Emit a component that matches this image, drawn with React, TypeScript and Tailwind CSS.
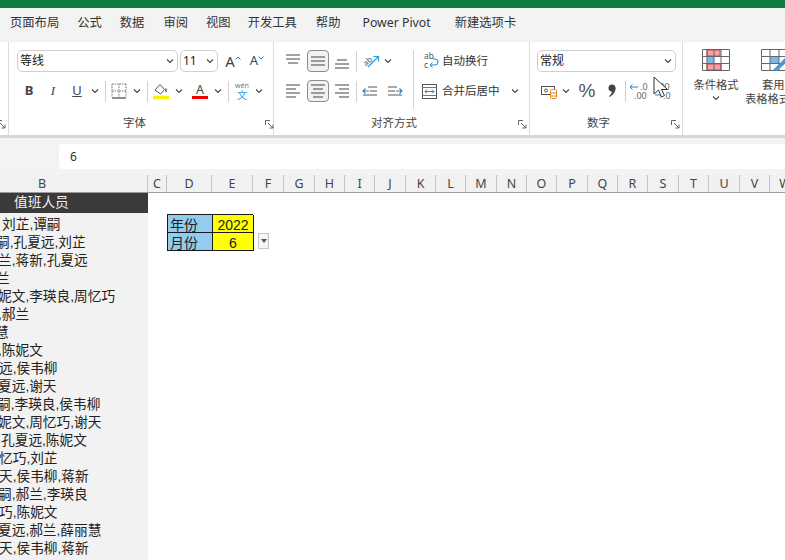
import type { ReactNode } from 'react'

const tabs = [
  { label: '页面布局', cls: 'ml-[10px]' },
  { label: '公式', cls: 'ml-[18px]' },
  { label: '数据', cls: 'ml-[18px]' },
  { label: '审阅', cls: 'ml-[19px]' },
  { label: '视图', cls: 'ml-[18px]' },
  { label: '开发工具', cls: 'ml-[17px]' },
  { label: '帮助', cls: 'ml-[19px]' },
  { label: 'Power Pivot', cls: 'ml-[22px]' },
  { label: '新建选项卡', cls: 'ml-[24px]' },
]

const columns = [
  { label: 'C', cls: 'w-[19px]' },
  { label: 'D', cls: 'w-[45px]' },
  { label: 'E', cls: 'w-[41px]' },
  { label: 'F', cls: 'w-[31px]' },
  { label: 'G', cls: 'w-[31px]' },
  { label: 'H', cls: 'w-[30px]' },
  { label: 'I', cls: 'w-[30px]' },
  { label: 'J', cls: 'w-[31px]' },
  { label: 'K', cls: 'w-[30px]' },
  { label: 'L', cls: 'w-[30px]' },
  { label: 'M', cls: 'w-[31px]' },
  { label: 'N', cls: 'w-[30px]' },
  { label: 'O', cls: 'w-[30px]' },
  { label: 'P', cls: 'w-[31px]' },
  { label: 'Q', cls: 'w-[30px]' },
  { label: 'R', cls: 'w-[30px]' },
  { label: 'S', cls: 'w-[31px]' },
  { label: 'T', cls: 'w-[30px]' },
  { label: 'U', cls: 'w-[31px]' },
  { label: 'V', cls: 'w-[30px]' },
  { label: 'W', cls: 'w-[31px]' },
]

const people = [
  { text: '刘芷,谭嗣', cls: 'ml-[2px]' },
  { text: '嗣,孔夏远,刘芷', cls: 'ml-[-4px]' },
  { text: '兰,蒋新,孔夏远', cls: 'ml-[-2px]' },
  { text: '兰', cls: 'ml-[-4px]' },
  { text: '妮文,李瑛良,周忆巧', cls: 'ml-[-2px]' },
  { text: ',郝兰', cls: 'ml-[-2px]' },
  { text: '慧', cls: 'ml-[-5px]' },
  { text: ',陈妮文', cls: 'ml-[-2px]' },
  { text: '远,侯韦柳', cls: 'ml-[-1px]' },
  { text: '夏远,谢天', cls: 'ml-[-2px]' },
  { text: '嗣,李瑛良,侯韦柳', cls: 'ml-[-3px]' },
  { text: '妮文,周忆巧,谢天', cls: 'ml-[-2px]' },
  { text: '孔夏远,陈妮文', cls: 'ml-[1px]' },
  { text: '忆巧,刘芷', cls: 'ml-[-1px]' },
  { text: '天,侯韦柳,蒋新', cls: 'ml-[-1px]' },
  { text: '嗣,郝兰,李瑛良', cls: 'ml-[-2px]' },
  { text: '巧,陈妮文', cls: 'ml-[-1px]' },
  { text: '夏远,郝兰,薛丽慧', cls: 'ml-[-2px]' },
  { text: '天,侯韦柳,蒋新', cls: 'ml-[-1px]' },
]

const Chev = () => (
  <svg width="8" height="6" viewBox="0 0 8 6" fill="none" stroke="#444" strokeWidth="1.1">
    <path d="M1 1.5 4 4.5 7 1.5" />
  </svg>
)

const Lines = ({ rows }: { rows: number[][] }) => (
  <svg width="16" height="16" viewBox="0 0 16 16" stroke="#555" strokeWidth="1.1">
    {rows.map(([y, a, b]) => (
      <path key={`${y}-${a}`} d={`M${a} ${y}H${b}`} />
    ))}
  </svg>
)

const Indent = ({ flip }: { flip?: boolean }) => (
  <svg width="16" height="14" viewBox="0 0 16 14" fill="none">
    <g className={flip ? 'scale-x-[-1] origin-center' : ''}>
      <path d="M6 3H15M8 7H15M1 11H15" stroke="#555" strokeWidth="1.1" />
      <path d="M7 7H1M3.5 4.5 1 7l2.5 2.5" stroke="#1c86d6" strokeWidth="1.1" />
    </g>
  </svg>
)

const Slot = ({ cls, children }: { cls: string; children?: ReactNode }) => (
  <div className={`flex h-[22px] shrink-0 items-center justify-center ${cls}`}>{children}</div>
)

const Sep = () => <div className="h-[21px] w-px bg-[#d0d0d0]" />

const Expander = ({ cls }: { cls: string }) => (
  <svg className={`absolute top-[78px] ${cls}`} width="9" height="9" viewBox="0 0 9 9" fill="none" stroke="#555" strokeWidth="0.9">
    <path d="M.5 5V.5H5M3 3l5 5M8 4.5V8H4.5" />
  </svg>
)

const Combo = ({ cls, text }: { cls: string; text: string }) => (
  <div className={`flex h-[22px] items-center justify-between rounded-[5px] border border-[#cfcfcf] bg-white pl-[2px] pr-[3px] text-[12px] ${cls}`}>
    <span>{text}</span>
    <Chev />
  </div>
)

const GroupLabel = ({ cls, text }: { cls: string; text: string }) => (
  <div className={`absolute top-[74px] text-[11.5px] leading-[14px] text-[#444] ${cls}`}>{text}</div>
)

const FontGroup = () => (
  <div className="relative h-full w-[265px] shrink-0 border-r border-[#dcdcdc] pl-[8px] pt-[8px]">
    <div className="flex items-center">
      <Combo cls="w-[161px]" text="等线" />
      <Combo cls="ml-[2px] w-[38px]" text="11" />
      <Slot cls="ml-[5px] w-[20px]">
        <span className="text-[15px] text-[#444]">A</span>
        <svg className="mb-[7px]" width="6" height="4" viewBox="0 0 6 4" fill="none" stroke="#1c86d6"><path d="M.5 3.5 3 1l2.500 2.500" /></svg>
      </Slot>
      <Slot cls="ml-[4px] w-[20px]">
        <span className="text-[13px] text-[#444]">A</span>
        <svg className="mb-[7px]" width="6" height="4" viewBox="0 0 6 4" fill="none" stroke="#1c86d6"><path d="M.5 .5 3 3 5.500 .5" /></svg>
      </Slot>
    </div>
    <div className="mt-[8px] flex items-center text-[#444]">
      <Slot cls="w-[24px] text-[13px] font-bold">B</Slot>
      <Slot cls="w-[24px] text-[13px] italic font-['Liberation_Serif',serif]">I</Slot>
      <Slot cls="w-[24px] text-[13px] underline">U</Slot>
      <Slot cls="w-[12px]"><Chev /></Slot>
      <Slot cls="w-[8px]"><Sep /></Slot>
      <Slot cls="w-[20px]">
        <svg width="16" height="16" viewBox="0 0 16 16" fill="none" stroke="#777" strokeDasharray="1.500 1">
          <path d="M1 1H15M1 8H15M1 1V14M8 1V14M15 1V14" />
          <path d="M1 15H15" stroke="#222" strokeDasharray="none" />
        </svg>
      </Slot>
      <Slot cls="w-[16px]"><Chev /></Slot>
      <Slot cls="w-[4px]"><Sep /></Slot>
      <Slot cls="w-[24px]">
        <svg width="16" height="18" viewBox="0 0 16 18" fill="none">
          <path d="M2 8 7 2.500l4.500 5-4 4.500z" stroke="#555" />
          <path d="M13 6.500V10" stroke="#1c6fc0" strokeWidth="1.500" />
          <path d="M0 15.500H16" stroke="#ffee00" strokeWidth="3.500" />
        </svg>
      </Slot>
      <Slot cls="w-[12px]"><Chev /></Slot>
      <Slot cls="ml-[3px] w-[24px]">
        <div className="flex flex-col items-center leading-none">
          <span className="text-[12.5px] leading-[13px]">A</span>
          <span className="h-[3.500px] w-[16px] bg-[#ee0000]" />
        </div>
      </Slot>
      <Slot cls="w-[12px]"><Chev /></Slot>
      <Slot cls="w-[8px]"><Sep /></Slot>
      <Slot cls="w-[20px]">
        <div className="flex flex-col items-center leading-none">
          <span className="text-[7px] leading-[8px] text-[#777]">wén</span>
          <span className="text-[10px] leading-[11px] text-[#2f9be3]">文</span>
        </div>
      </Slot>
      <Slot cls="w-[14px]"><Chev /></Slot>
    </div>
    <GroupLabel cls="left-[114px]" text="字体" />
    <Expander cls="left-[256px]" />
  </div>
)

const AlignGroup = () => (
  <div className="relative flex h-full w-[256px] shrink-0 border-r border-[#dcdcdc] pl-[8px] pt-[8px]">
    <div className="w-[127px] shrink-0">
      <div className="flex items-center">
        <Slot cls="w-[22px]"><Lines rows={[[2, 1, 15], [6, 1, 15], [10, 3, 13]]} /></Slot>
        <Slot cls="ml-[3px] w-[22px] rounded-[4px] border border-[#8d8d8d] bg-[#f1f1f1]"><Lines rows={[[4, 1, 15], [8, 1, 15], [12, 1, 15]]} /></Slot>
        <Slot cls="ml-[3px] w-[20px]"><Lines rows={[[7, 3, 13], [11, 1, 15], [15, 1, 15]]} /></Slot>
        <Slot cls="w-[8px]"><Sep /></Slot>
        <Slot cls="w-[24px]">
          <svg width="18" height="18" viewBox="0 0 18 18" fill="none">
            <text x="0" y="11" fontSize="8" fill="#555" transform="rotate(-40 6 9)">ab</text>
            <path d="M5 15 15 5M10.500 4.500H15.500V9.500" stroke="#2f9be3" strokeWidth="1.200" />
          </svg>
        </Slot>
        <Slot cls="w-[8px]"><Chev /></Slot>
      </div>
      <div className="mt-[8px] flex items-center">
        <Slot cls="w-[22px]"><Lines rows={[[2, 1, 15], [6, 1, 11], [10, 1, 15], [14, 1, 11]]} /></Slot>
        <Slot cls="ml-[3px] w-[22px] rounded-[4px] border border-[#8d8d8d] bg-[#f1f1f1]"><Lines rows={[[2, 1, 15], [6, 3, 13], [10, 1, 15], [14, 3, 13]]} /></Slot>
        <Slot cls="ml-[3px] w-[20px]"><Lines rows={[[2, 1, 15], [6, 5, 15], [10, 1, 15], [14, 5, 15]]} /></Slot>
        <Slot cls="w-[8px]"><Sep /></Slot>
        <Slot cls="w-[20px]"><Indent /></Slot>
        <Slot cls="w-[30px]"><Indent flip /></Slot>
      </div>
    </div>
    <div className="ml-[4px] h-[59px] w-px shrink-0 bg-[#d4d4d4]" />
    <div className="ml-[8px] text-[11.500px] text-[#333]">
      <div className="flex h-[22px] items-center">
        <svg width="18" height="20" viewBox="0 0 18 20" fill="none">
          <text x="2" y="8" fontSize="8.500" fill="#555">ab</text>
          <text x="2" y="17" fontSize="8.500" fill="#555">c</text>
          <path d="M8 14h5q3 0 3-3t-3-3h-2M8 14l2.500-2.500M8 14l2.500 2.500" stroke="#1c86d6" />
        </svg>
        <span className="ml-[2px]">自动换行</span>
      </div>
      <div className="mt-[8px] flex h-[22px] items-center">
        <svg width="15" height="15" viewBox="0 0 15 15" fill="none">
          <rect x=".5" y=".5" width="14" height="14" stroke="#555" />
          <path d="M.5 3.500H14.500M.5 11.500H14.500" stroke="#777" />
          <path d="M3 7.500H12M5 5.500 3 7.500l2 2M10 5.500l2 2-2 2" stroke="#1c86d6" />
        </svg>
        <span className="ml-[5px]">合并后居中</span>
        <span className="ml-[11px] flex"><Chev /></span>
      </div>
    </div>
    <GroupLabel cls="left-[97px]" text="对齐方式" />
    <Expander cls="left-[244px]" />
  </div>
)

const NumberGroup = () => (
  <div className="relative h-full w-[153px] shrink-0 border-r border-[#dcdcdc] pl-[7px] pt-[8px]">
    <Combo cls="w-[139px]" text="常规" />
    <div className="mt-[8px] flex items-center text-[#444]">
      <Slot cls="w-[24px]">
        <svg width="16" height="15" viewBox="0 0 16 15" fill="none">
          <rect x=".5" y="2.500" width="13" height="8" stroke="#555" />
          <circle cx="5" cy="6.500" r="1.500" stroke="#555" />
          <rect x="9.500" y="5.500" width="6" height="9" rx="1" fill="#fff" stroke="#e8861f" />
          <path d="M10 9H15M10 12H15" stroke="#e8861f" />
        </svg>
      </Slot>
      <Slot cls="w-[10px]"><Chev /></Slot>
      <Slot cls="ml-[4px] w-[24px] text-[19px] font-['Liberation_Sans',sans-serif] text-[#555]">%</Slot>
      <Slot cls="ml-px w-[24px]">
        <svg width="8" height="14" viewBox="0 0 8 14" fill="#444">
          <circle cx="4" cy="4" r="3.500" />
          <path d="M7.500 4Q7.500 10 1.500 13L1 12Q4 10 4 6z" />
        </svg>
      </Slot>
      <Slot cls="w-[3px]"><Sep /></Slot>
      <Slot cls="w-[24px]">
        <svg width="20" height="18" viewBox="0 0 20 18" fill="none">
          <path d="M9 5H1M3.500 2.500 1 5l2.500 2.500" stroke="#1c86d6" />
          <text x="11" y="8" fontSize="9" fill="#666">.0</text>
          <text x="5" y="17" fontSize="9" fill="#666">.00</text>
        </svg>
      </Slot>
      <Slot cls="w-[22px]">
        <svg width="20" height="18" viewBox="0 0 20 18" fill="none">
          <text x="5" y="8" fontSize="9" fill="#666">.00</text>
          <text x="11" y="17" fontSize="9" fill="#666">.0</text>
          <path d="M3 13H11M8.500 10.500 11 13l-2.500 2.500" stroke="#1c86d6" />
        </svg>
      </Slot>
    </div>
    <GroupLabel cls="left-[57px]" text="数字" />
    <Expander cls="left-[141px]" />
  </div>
)

const CondFormat = () => (
  <div className="flex h-full w-[66px] shrink-0 flex-col items-center pt-[7px] text-[11.300px] leading-[14px] text-[#444]">
    <svg width="28" height="22" viewBox="0 0 28 22" fill="none">
      <path d="M5 1H18V7H5zM5 15H19V21H5z" fill="#f8a0a8" stroke="#e0404c" />
      <path d="M5 8H12V14H5z" fill="#7ab8ea" />
      <path d="M.5 .5H27.500V21.500H.5zM.5 7.500H27.500M.5 14.500H27.500M5 .5V21.500M12 .5V21.500M19 .5V21.500" stroke="#666" />
    </svg>
    <span className="mt-[7px]">条件格式</span>
    <span className="mt-[3px] flex"><Chev /></span>
  </div>
)

const TableFormat = () => (
  <div className="ml-[-4px] flex h-full w-[56px] shrink-0 flex-col items-start pt-[7px] text-[11.300px] leading-[14px] text-[#444]">
    <svg className="ml-[16px] shrink-0" width="30" height="22" viewBox="0 0 30 22" fill="none">
      <path d="M9 7H18V14H9z" fill="#7ab8ea" />
      <path d="M.5 .5H29.500V21.500H.5zM.5 7.500H29.500M.5 14.500H29.500M9 .5V21.500M18 .5V21.500" stroke="#666" />
      <path d="M12 21 24 9l3 3-11 10z" fill="#4a9ad8" />
    </svg>
    <span className="ml-[17px] mt-[7px]">套用</span>
    <span className="whitespace-nowrap">表格格式</span>
  </div>
)

const Cursor = () => (
  <svg className="absolute left-[653px] top-[76px]" width="16" height="22" viewBox="0 0 16 22" fill="#fff" stroke="#333" strokeWidth="1">
    <path d="M1 1V18L5.500 14 8.500 21 11.500 19.500 8.500 13.500H14.500z" />
  </svg>
)

export default function App() {
  return (
    <div className="relative flex h-[560px] w-[785px] flex-col overflow-hidden bg-white font-['Noto_Sans','Noto_Sans_CJK_SC',sans-serif] text-[#222]">
      <div className="h-[8px] shrink-0 bg-[#107c41]" />

      <div className="flex h-[29px] shrink-0 items-center bg-[#f3f3f3] pt-[2px] text-[12.300px] text-[#333]">
        {tabs.map(t => (
          <span key={t.label} className={`whitespace-nowrap ${t.cls}`}>{t.label}</span>
        ))}
      </div>

      <div className="h-[5px] shrink-0 bg-[#f3f3f3]" />

      <div className="flex h-[93px] shrink-0 overflow-hidden bg-white">
        <div className="relative h-full w-[9px] shrink-0 border-r border-[#dcdcdc]">
          <Expander cls="left-[-3px]" />
        </div>
        <FontGroup />
        <AlignGroup />
        <NumberGroup />
        <CondFormat />
        <TableFormat />
      </div>
      <Cursor />

      <div className="h-[3px] shrink-0 bg-[#d6d6d6]" />

      <div className="flex h-[37px] shrink-0 items-center bg-[#f3f3f3] pl-[59px]">
        <div className="flex h-[25px] flex-1 items-center rounded-l-[4px] bg-white pl-[11px] text-[12px] text-[#333]">6</div>
      </div>

      <div className="flex h-[18px] shrink-0 border-b border-[#9c9c9c] bg-[#f1f1f1] text-[12.500px] leading-[17px] text-[#444]">
        <div className="w-[148px] shrink-0 border-r border-[#c4c4c4] pl-[38px] text-left">B</div>
        {columns.map(c => (
          <div key={c.label} className={`shrink-0 border-r border-[#c4c4c4] text-center ${c.cls}`}>{c.label}</div>
        ))}
      </div>

      <div className="flex min-h-0 flex-1">
        <div className="w-[148px] shrink-0 overflow-hidden bg-[#f2f2f2] font-['Liberation_Sans','Noto_Sans_CJK_SC',sans-serif] text-[13.700px]">
          <div className="flex h-[20px] items-center bg-[#3a3a3a] pl-[14px] text-[#efefef]">值班人员</div>
          <div className="h-[3px]" />
          {people.map((p, i) => (
            <div key={i} className={`h-[18px] whitespace-nowrap leading-[18px] ${p.cls}`}>{p.text}</div>
          ))}
        </div>

        <div className="flex-1 pl-[19px] pt-[21px] font-['Liberation_Sans','Noto_Sans_CJK_SC',sans-serif] text-[14px] leading-[20px]">
          <div className="flex items-start">
            <div className="grid w-[86px] grid-cols-[45px_41px] border-l border-t border-[#1a1a1a]">
              <div className="h-[18px] border-b border-r border-[#1a1a1a] bg-[#92cdf0] pl-[2px]">年份</div>
              <div className="h-[18px] border-b border-r border-[#1a1a1a] bg-[#ffff00] text-center">2022</div>
              <div className="h-[18px] border-b border-r border-[#1a1a1a] bg-[#92cdf0] pl-[2px]">月份</div>
              <div className="h-[18px] border-b border-r border-[#1a1a1a] bg-[#ffff00] text-center">6</div>
            </div>
            <div className="ml-[5px] mt-[19px] flex h-[16px] w-[11px] items-center justify-center border border-[#c4c4c4] bg-[#f6f6f6]">
              <div className="h-0 w-0 border-x-[3.500px] border-t-[4px] border-x-transparent border-t-[#555]" />
            </div>
          </div>
        </div>
      </div>
    </div>
  )
}
